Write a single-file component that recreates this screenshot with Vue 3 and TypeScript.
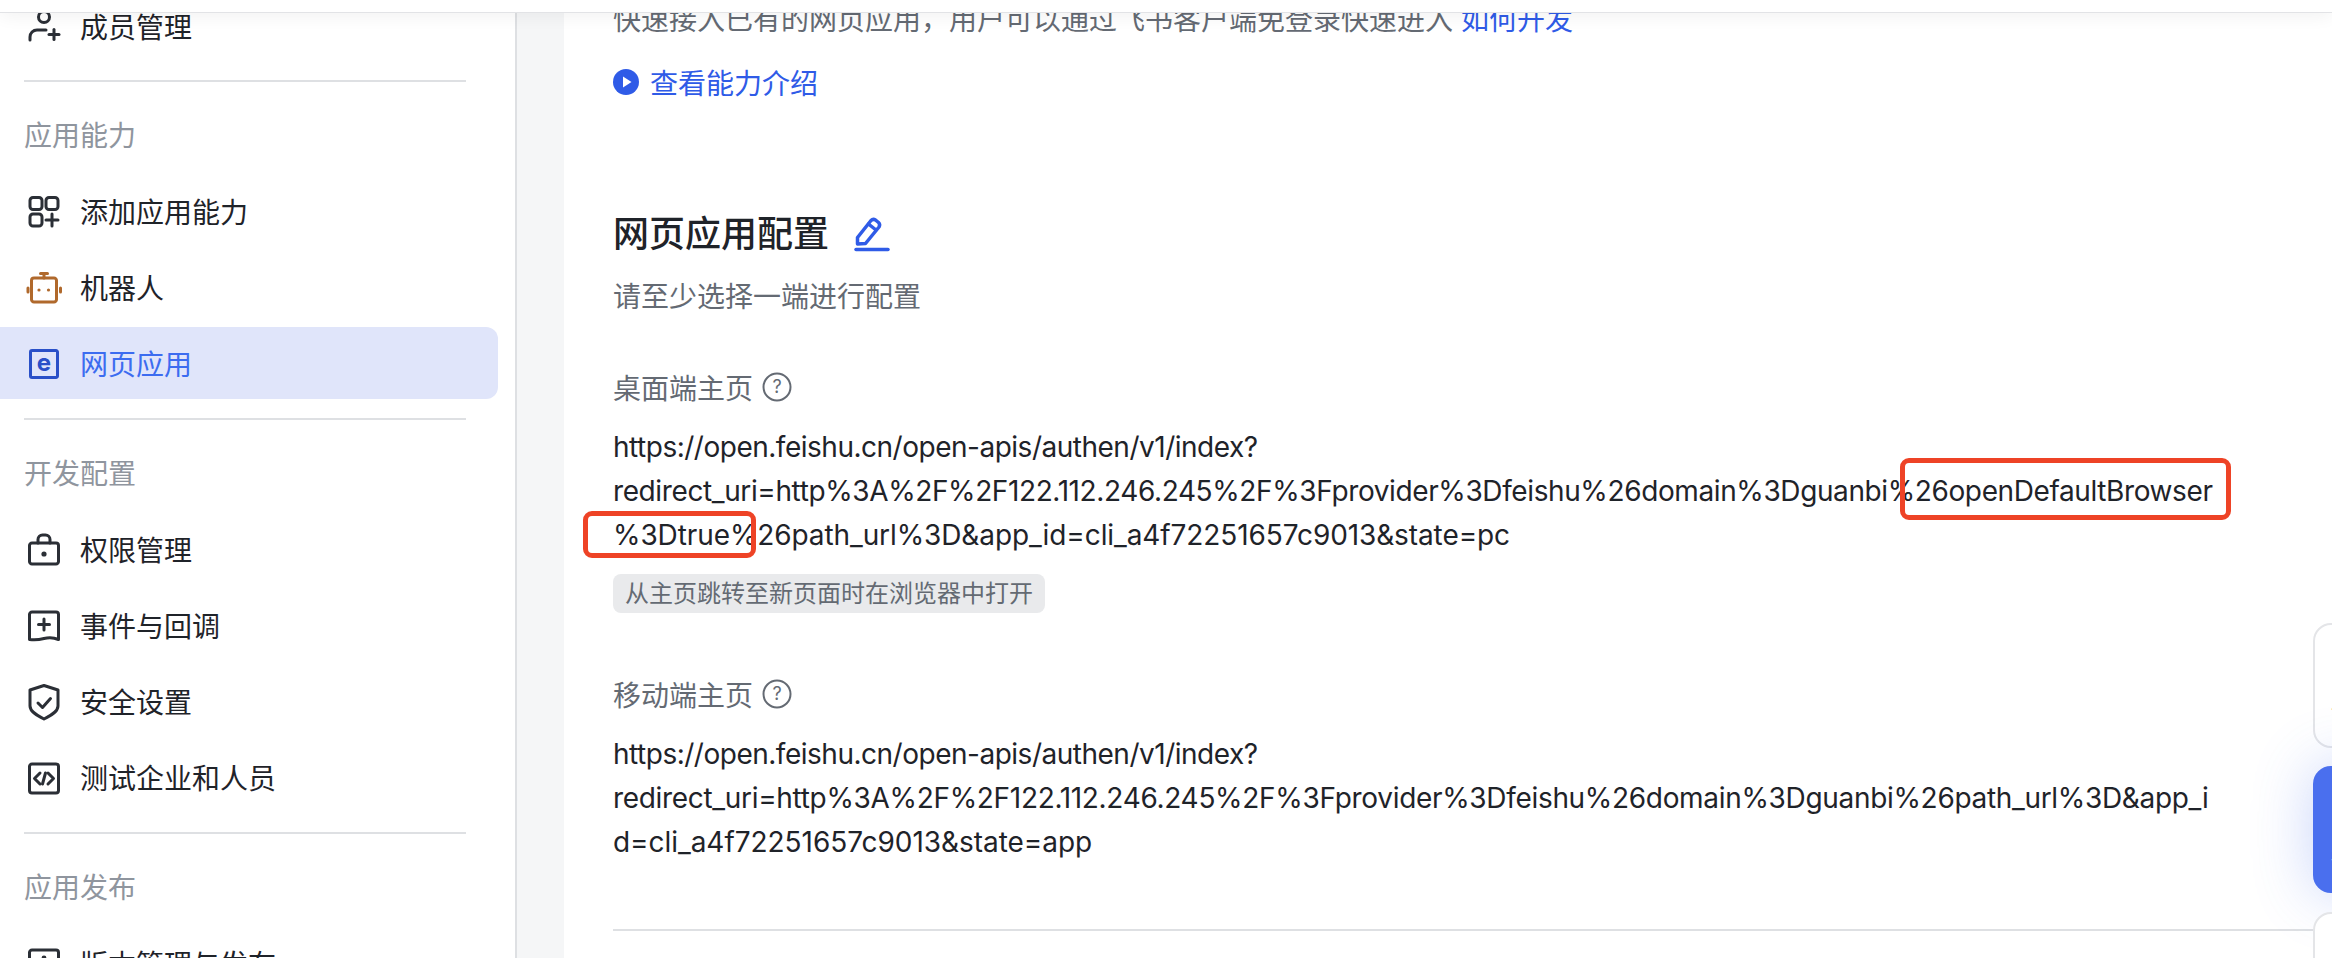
<template>
  <div class="page">
    <aside class="sidebar">
      <template v-for="(group, index) in navGroups" :key="index">
        <div v-if="index > 0" class="divider"></div>
        <div v-if="group.title" class="group-title">{{ group.title }}</div>
        <div class="group-items">
          <div
            v-for="item in group.items"
            :key="item.label"
            class="nav-item"
            :class="{ active: item.active }"
          >
            <svg class="nav-icon" :class="item.iconClass" viewBox="0 0 32 32" fill="none">
              <path v-for="d in item.paths" :key="d" :d="d" />
              <circle v-for="dot in item.dots" :key="dot[0]" class="dot" :cx="dot[0]" :cy="dot[1]" :r="dot[2]" />
              <text v-if="item.active" class="e-mark" x="16" y="24" text-anchor="middle">e</text>
            </svg>
            <span>{{ item.label }}</span>
          </div>
        </div>
      </template>
    </aside>

    <div class="gutter"></div>

    <main class="content">
      <p class="intro">快速接入已有的网页应用，用户可以通过飞书客户端免登录快速进入 <a class="link">如何开发</a></p>
      <div class="video-link">
        <svg class="play" viewBox="0 0 26 26">
          <circle cx="13" cy="13" r="13" fill="#2f5be7" />
          <path d="M10 7.5 L18.5 13 L10 18.5 Z" fill="#fff" />
        </svg>
        <span>查看能力介绍</span>
      </div>

      <div class="title-row">
        <h2>网页应用配置</h2>
        <svg class="edit" viewBox="0 0 34 34" fill="none">
          <path d="M2.500 20.500 L16 3.500 Q18 1.500 20.500 3 L23.500 5.500 Q25.500 7.500 24 10 L10.500 26.500 L2.500 27 Z" />
          <path d="M13.500 7 L21 13" />
          <path d="M1 32.500 H33" />
        </svg>
      </div>
      <p class="hint">请至少选择一端进行配置</p>

      <section v-for="block in urlBlocks" :key="block.label" class="url-block">
        <div class="field-label">
          <span>{{ block.label }}</span>
          <svg class="help" viewBox="0 0 30 30" fill="none">
            <circle cx="15" cy="15" r="13.500" />
            <text x="15" y="21" text-anchor="middle">?</text>
          </svg>
        </div>
        <div class="url">
          <div
            v-for="line in block.lines"
            :key="line.text"
            :style="{ letterSpacing: line.spacing + 'px' }"
          >{{ line.text }}</div>
        </div>
        <div v-if="block.tag" class="tag">{{ block.tag }}</div>
      </section>

      <hr class="rule" />
    </main>

    <!-- annotations and floating widgets lie over the page -->
    <div class="mark mark-one"></div>
    <div class="mark mark-two"></div>

    <div class="float-card card-one"><span>评</span></div>
    <div class="float-card card-two"><span>社</span></div>
    <div class="float-card card-three"></div>

    <div class="topbar"></div>
  </div>
</template>

<script setup lang="ts">
interface NavItem {
  label: string;
  paths: string[];
  dots?: number[][];
  iconClass?: string;
  active?: boolean;
}

interface NavGroup {
  title?: string;
  items: NavItem[];
}

interface UrlLine {
  text: string;
  spacing: number; // tracking so the line ends where the original font ends it
}

interface UrlBlock {
  label: string;
  lines: UrlLine[];
  tag?: string;
}

const navGroups: NavGroup[] = [
  {
    items: [
      {
        label: '成员管理',
        paths: ['M21.500 7a5.500 5.500 0 1 1-11 0a5.500 5.500 0 1 1 11 0', 'M2 30v-3a7 7 0 0 1 7-7h9', 'M21 24.500h10', 'M26 19.500v10'],
      },
    ],
  },
  {
    title: '应用能力',
    items: [
      {
        label: '添加应用能力',
        paths: [
          'M5 2.500h6a3 3 0 0 1 3 3v6a3 3 0 0 1-3 3h-6a3 3 0 0 1-3-3v-6a3 3 0 0 1 3-3z',
          'M21 2.500h6a3 3 0 0 1 3 3v6a3 3 0 0 1-3 3h-6a3 3 0 0 1-3-3v-6a3 3 0 0 1 3-3z',
          'M5 19h6a3 3 0 0 1 3 3v6a3 3 0 0 1-3 3h-6a3 3 0 0 1-3-3v-6a3 3 0 0 1 3-3z',
          'M18 25h12',
          'M24 19v12',
        ],
      },
      {
        label: '机器人',
        iconClass: 'robot',
        paths: [
          'M6 7h20a2.500 2.500 0 0 1 2.500 2.500v19a2.500 2.500 0 0 1-2.500 2.500h-20a2.500 2.500 0 0 1-2.500-2.500v-19a2.500 2.500 0 0 1 2.500-2.500z',
          'M16 7v-4',
          'M12.500 2.500h7',
          'M0 17v4',
          'M32.500 17v4',
        ],
        dots: [[11, 19, 1.6], [20.500, 19, 1.6]],
      },
      {
        label: '网页应用',
        iconClass: 'web',
        active: true,
        paths: ['M4 3.500h24a1.500 1.500 0 0 1 1.500 1.500v24a1.500 1.500 0 0 1-1.500 1.500h-24a1.500 1.500 0 0 1-1.500-1.500v-24a1.500 1.500 0 0 1 1.500-1.500z'],
      },
    ],
  },
  {
    title: '开发配置',
    items: [
      {
        label: '权限管理',
        paths: [
          'M4 10h24a2.500 2.500 0 0 1 2.500 2.500v16a2.500 2.500 0 0 1-2.500 2.500h-24a2.500 2.500 0 0 1-2.500-2.500v-16a2.500 2.500 0 0 1 2.500-2.500z',
          'M10 10v-3.500a4.500 4.500 0 0 1 4.500-4.500h3a4.500 4.500 0 0 1 4.500 4.500v3.500',
        ],
        dots: [[16, 21, 2.6]],
      },
      {
        label: '事件与回调',
        paths: [
          'M4 3h24a2.500 2.500 0 0 1 2.500 2.500v25q-7-3-14.500-1t-14.500 1v-25a2.500 2.500 0 0 1 2.500-2.500z',
          'M10.500 15.500h11',
          'M16 10v11',
        ],
      },
      {
        label: '安全设置',
        paths: ['M16 0.500L30 5V21C30 27 22 31 16 34C10 31 2 27 2 21V5Z', 'M10 18L14.500 22.500L22.500 13.500'],
      },
      {
        label: '测试企业和人员',
        paths: [
          'M4 3h24a2.500 2.500 0 0 1 2.500 2.500v24a2.500 2.500 0 0 1-2.500 2.500h-24a2.500 2.500 0 0 1-2.500-2.500v-24a2.500 2.500 0 0 1 2.500-2.500z',
          'M12 12L6.500 17.500L12 23',
          'M20 12L25.500 17.500L20 23',
          'M17.500 12L14.500 23',
        ],
      },
    ],
  },
  {
    title: '应用发布',
    items: [
      {
        label: '版本管理与发布',
        paths: ['M4 3h24a2.500 2.500 0 0 1 2.500 2.500v24a2.500 2.500 0 0 1-2.500 2.500h-24a2.500 2.500 0 0 1-2.500-2.500v-24a2.500 2.500 0 0 1 2.500-2.500z'],
        dots: [[16, 11, 2.4]],
      },
    ],
  },
];

const urlBlocks: UrlBlock[] = [
  {
    label: '桌面端主页',
    lines: [
      { text: 'https://open.feishu.cn/open-apis/authen/v1/index?', spacing: -0.49 },
      { text: 'redirect_uri=http%3A%2F%2F122.112.246.245%2F%3Fprovider%3Dfeishu%26domain%3Dguanbi%26openDefaultBrowser', spacing: -0.39 },
      { text: '%3Dtrue%26path_url%3D&app_id=cli_a4f72251657c9013&state=pc', spacing: -0.1 },
    ],
    tag: '从主页跳转至新页面时在浏览器中打开',
  },
  {
    label: '移动端主页',
    lines: [
      { text: 'https://open.feishu.cn/open-apis/authen/v1/index?', spacing: -0.49 },
      { text: 'redirect_uri=http%3A%2F%2F122.112.246.245%2F%3Fprovider%3Dfeishu%26domain%3Dguanbi%26path_url%3D&app_i', spacing: -0.32 },
      { text: 'd=cli_a4f72251657c9013&state=app', spacing: -0.05 },
    ],
  },
];
</script>

<style>
html,
body {
  margin: 0;
  background: #fff;
}
</style>

<style scoped>
.page {
  position: relative;
  display: flex;
  width: 2332px;
  height: 958px;
  overflow: hidden;
  background: #fff;
  font-family: Inter, "Noto Sans CJK SC", sans-serif;
  font-size: 28px;
  color: #1f2329;
}

/* Sidebar */
.sidebar {
  flex: none;
  box-sizing: border-box;
  width: 517px;
  margin-top: -10px;
  padding-right: 17px;
  border-right: 2px solid #dee0e3;
}

.divider {
  height: 2px;
  margin: 19px 32px 0 24px;
  background: #dee0e3;
}

.group-items:first-child {
  margin-bottom: -1px;
}

.group-title {
  margin: 34px 0 19px 24px;
  line-height: 40px;
  color: #8f959e;
}

.group-items {
  display: flex;
  flex-direction: column;
  gap: 4px;
}

.nav-item {
  display: flex;
  align-items: center;
  gap: 20px;
  height: 72px;
  padding-left: 28px;
  border-radius: 0 12px 12px 0;
  flex: none;
}

.nav-item.active {
  background: #e0e5fa;
  color: #3c6cf0;
}

.nav-icon {
  flex: none;
  width: 32px;
  height: 32px;
  overflow: visible;
  stroke: #2b2f36;
  stroke-width: 3;
  stroke-linecap: round;
  stroke-linejoin: round;
}

.nav-icon .dot {
  fill: #2b2f36;
  stroke: none;
}

.nav-icon.robot {
  stroke: #b0692c;
}

.nav-icon.robot .dot {
  fill: #b0692c;
}

.nav-icon.web {
  stroke: #2a50c8;
}

.e-mark {
  fill: #2a50c8;
  stroke: none;
  font-size: 24px;
  font-weight: 700;
}

/* Main column */
.gutter {
  flex: none;
  width: 47px;
  background: #f5f6f7;
}

.content {
  flex: 1;
  min-width: 0;
  margin-top: -2px;
  padding-left: 49px;
}

.intro {
  margin: 0;
  line-height: 44px;
  color: #646a73;
  white-space: nowrap;
}

.link {
  color: #2f5be7;
}

.video-link {
  display: flex;
  align-items: center;
  gap: 11px;
  height: 44px;
  margin-top: 18px;
  color: #2f5be7;
}

.play {
  flex: none;
  width: 26px;
  height: 26px;
}

.title-row {
  display: flex;
  align-items: center;
  gap: 26px;
  height: 52px;
  margin-top: 104px;
}

.title-row h2 {
  margin: 0;
  font-size: 36px;
  font-weight: 500;
  line-height: 52px;
}

.edit {
  flex: none;
  width: 34px;
  height: 34px;
  overflow: visible;
  stroke: #2f5be7;
  stroke-width: 3.5;
  stroke-linejoin: round;
  stroke-linecap: round;
}

.hint {
  margin: 17px 0 0;
  line-height: 40px;
  color: #646a73;
}

.url-block {
  margin-top: 48px;
}

.url-block + .url-block {
  margin-top: 59px;
}

.field-label {
  display: flex;
  align-items: center;
  gap: 9px;
  height: 44px;
  color: #646a73;
}

.help {
  flex: none;
  width: 30px;
  height: 30px;
  stroke: #646a73;
  stroke-width: 2;
}

.help text {
  fill: #646a73;
  stroke: none;
  font-size: 18px;
}

.url {
  margin-top: 16px;
  line-height: 44px;
  white-space: nowrap;
}

.tag {
  display: inline-block;
  margin-top: 17px;
  padding: 0 12px;
  border-radius: 8px;
  background: #e9eaec;
  color: #646a73;
  font-size: 24px;
  line-height: 39px;
  vertical-align: top;
}

.rule {
  height: 2px;
  margin: 65px 0 0;
  border: none;
  background: #dee0e3;
}

/* Red annotation boxes from the screenshot */
.mark {
  position: absolute;
  box-sizing: border-box;
  border: 5px solid #ee4326;
  border-radius: 9px;
}

.mark-one {
  left: 1900px;
  top: 458px;
  width: 331px;
  height: 62px;
}

.mark-two {
  left: 583px;
  top: 511px;
  width: 173px;
  height: 47px;
}

/* Floating widgets clipped by the right edge */
.float-card {
  position: absolute;
  left: 2313px;
  box-sizing: border-box;
  width: 80px;
  padding-left: 16px;
  border: 2px solid #e4e5e8;
  border-radius: 18px;
  background: #fff;
  font-size: 24px;
  display: flex;
  flex-direction: column;
  justify-content: flex-end;
}

.card-one {
  top: 623px;
  height: 125px;
  padding-bottom: 18px;
}

.card-two {
  top: 766px;
  height: 127px;
  padding-bottom: 18px;
  border-color: #4a6fee;
  background: #4a6fee;
  color: #fff;
  box-shadow: 0 0 60px rgba(74, 111, 238, 0.3);
}

.card-three {
  top: 912px;
  height: 120px;
}

.topbar {
  position: absolute;
  top: 0;
  left: 0;
  right: 0;
  height: 12px;
  background: #fff;
  border-bottom: 1px solid #e2e3e6;
  box-shadow: 0 2px 18px rgba(0, 0, 0, 0.07);
}
</style>
